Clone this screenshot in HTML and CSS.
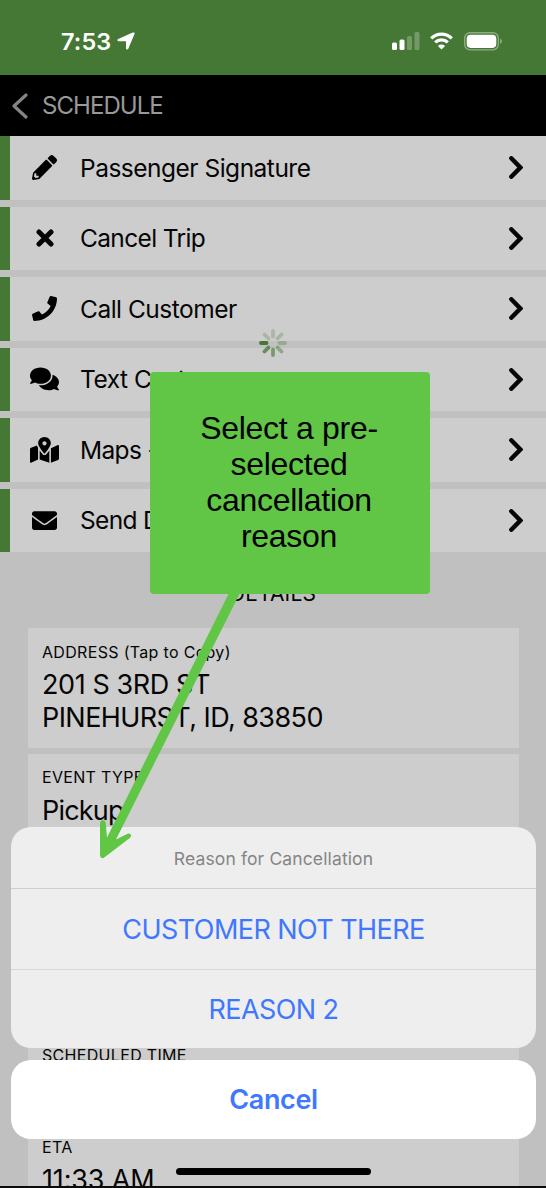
FILE: index.html
```html
<!DOCTYPE html>
<html lang="en">
<head>
<meta charset="utf-8">
<title>Schedule</title>
<link rel="stylesheet" href="styles.css">
</head>
<body>
<div class="screen">
  <header class="status">
    <div class="clock"><span class="time">7:53</span>
      <svg class="locate" viewBox="0 0 18 18"><path d="M17.300.7c.5.5.3 1 .1 1.500L11.300 16.700c-.5 1.200-2.300.9-2.300-.5V9.300H1.700C.2 9.300-.1 7.500 1.200 7L15.800.6c.6-.3 1.100-.3 1.500.1z"/></svg>
    </div>
    <div class="signals">
      <svg class="cell" width="28" height="19" viewBox="0 0 28 19"><rect x="0" y="10.500" width="5" height="7.500" rx="1.500"/><rect x="7.500" y="7.500" width="5" height="10.500" rx="1.500"/><rect class="dim" x="15" y="4" width="5" height="14" rx="1.500"/><rect class="dim" x="22.500" y="0" width="5" height="18" rx="1.500"/></svg>
      <svg class="wifi" width="23" height="18" viewBox="0 0 23 18"><path class="arc" d="M1.200 6.300a14.600 14.600 0 0 1 20.600 0M5.200 10.400a8.900 8.900 0 0 1 12.600 0"/><path d="M11.500 17.600 7.900 14a5.100 5.100 0 0 1 7.200 0z"/></svg>
      <svg class="battery" width="39" height="19" viewBox="0 0 39 19"><rect class="shell" x=".7" y=".7" width="33.600" height="17.200" rx="5.300"/><rect x="2.700" y="2.700" width="29.600" height="13.200" rx="3.800"/><path class="dim" d="M36 6.500q2 1 2 2.800t-2 2.800z"/></svg>
    </div>
  </header>
  <nav class="navbar">
    <svg width="18" height="28" viewBox="0 0 18 28"><path d="M15 3 3 14l12 11"/></svg>
    <span class="nav-title">SCHEDULE</span>
  </nav>
  <main>
    <ul class="actions">
      <li class="action"><span class="icon"><svg width="25" viewBox="0 0 512 512"><path fill-rule="evenodd" d="M497.900 142.100l-46.100 46.100c-4.700 4.700-12.300 4.700-17 0l-111-111c-4.700-4.700-4.700-12.300 0-17l46.100-46.100c18.700-18.700 49.100-18.700 67.900 0l60.100 60.100c18.800 18.700 18.800 49.100 0 67.900zM284.200 99.800L21.600 362.400.4 483.900c-2.900 16.400 11.400 30.600 27.800 27.800l121.500-21.300 262.600-262.600c4.700-4.700 4.700-12.300 0-17l-111-111c-4.800-4.700-12.400-4.700-17.100 0zM88 424h48v36.300l-64.500 11.300-31.100-31.100L51.700 376H88v48z"/></svg></span><span class="label">Passenger Signature</span><svg class="chev" width="14" height="23" viewBox="0 0 14 23"><path d="M2.300 2.300 11.300 11.500l-9 9.200"/></svg></li>
      <li class="action"><span class="icon"><svg width="18" viewBox="0 0 18 18"><path class="cross" d="M3 3l12 12M15 3 3 15"/></svg></span><span class="label tight">Cancel Trip</span><svg class="chev" width="14" height="23" viewBox="0 0 14 23"><path d="M2.300 2.300 11.300 11.500l-9 9.200"/></svg></li>
      <li class="action"><span class="icon"><svg width="25" viewBox="0 0 512 512"><path d="M493.400 24.600l-104-24c-11.300-2.600-22.900 3.300-27.500 13.900l-48 112c-4.200 9.800-1.400 21.300 6.900 28l60.600 49.600c-36 76.700-98.900 140.500-177.200 177.200l-49.600-60.600c-6.800-8.300-18.200-11.100-28-6.900l-112 48C3.900 366.500-2 378.100.6 389.400l24 104C27.100 504.200 36.700 512 48 512c256.100 0 464-207.500 464-464 0-11.200-7.700-20.900-18.600-23.400z"/></svg></span><span class="label">Call Customer</span><svg class="chev" width="14" height="23" viewBox="0 0 14 23"><path d="M2.300 2.300 11.300 11.500l-9 9.200"/></svg></li>
      <li class="action"><span class="icon"><svg width="29" viewBox="0 0 576 512"><path d="M416 192c0-88.400-93.100-160-208-160S0 103.600 0 192c0 34.300 14.100 65.900 38 92-13.400 30.200-35.500 54.200-35.800 54.500-2.200 2.300-2.800 5.700-1.500 8.700S4.800 352 8 352c36.600 0 66.900-12.300 88.700-25 32.200 15.700 70.300 25 111.300 25 114.900 0 208-71.600 208-160zm122 220c23.900-26 38-57.700 38-92 0-66.900-53.500-124.200-129.300-148.100.9 6.600 1.300 13.300 1.300 20.100 0 105.900-107.700 192-240 192-10.800 0-21.300-.8-31.700-1.900C207.800 439.600 281.800 480 368 480c41 0 79.100-9.200 111.300-25 21.800 12.700 52.100 25 88.700 25 3.200 0 6.100-1.900 7.300-4.800 1.300-2.900.7-6.300-1.500-8.700-.3-.3-22.400-24.200-35.800-54.500z"/></svg></span><span class="label">Text Customer</span><svg class="chev" width="14" height="23" viewBox="0 0 14 23"><path d="M2.300 2.300 11.300 11.500l-9 9.200"/></svg></li>
      <li class="action"><span class="icon"><svg width="29" viewBox="0 0 576 512"><path d="M288 0c-69.590 0-126 56.410-126 126 0 56.260 82.350 158.800 113.900 196.020 6.390 7.540 17.820 7.540 24.200 0C331.650 284.800 414 182.260 414 126 414 56.410 357.590 0 288 0zm0 168c-23.200 0-42-18.800-42-42s18.800-42 42-42 42 18.800 42 42-18.800 42-42 42zM20.120 215.950A32.006 32.006 0 0 0 0 245.660v250.320c0 11.320 11.430 19.060 21.940 14.860L160 448V214.920c-8.840-15.980-16.070-31.540-21.250-46.420L20.120 215.950zM288 359.670c-14.070 0-27.380-6.180-36.510-16.960-19.660-23.200-40.570-49.620-59.490-76.720v182l192 64V266c-18.920 27.090-39.820 53.520-59.490 76.720-9.130 10.770-22.440 16.950-36.510 16.950zm266.060-198.510L416 224v288l139.880-55.950A31.996 31.996 0 0 0 576 426.340V176.020c0-11.320-11.430-19.060-21.940-14.860z"/></svg></span><span class="label tight">Maps -</span><svg class="chev" width="14" height="23" viewBox="0 0 14 23"><path d="M2.300 2.300 11.300 11.500l-9 9.200"/></svg></li>
      <li class="action"><span class="icon"><svg width="25" viewBox="0 0 512 512"><path d="M502.300 190.800c3.900-3.100 9.700-.2 9.700 4.700V400c0 26.500-21.500 48-48 48H48c-26.500 0-48-21.500-48-48V195.600c0-5 5.700-7.800 9.700-4.700 22.400 17.400 52.100 39.500 154.100 113.600 21.100 15.400 56.700 47.800 92.200 47.600 35.700.3 72-32.800 92.300-47.600 102-74.100 131.600-96.300 154-113.700zM256 320c23.200.4 56.600-29.200 73.400-41.400 132.700-96.300 142.800-104.700 173.400-128.700 5.800-4.500 9.200-11.500 9.200-18.900v-19c0-26.500-21.500-48-48-48H48c-26.500 0-48 21.500-48 48v19c0 7.400 3.400 14.300 9.200 18.900 30.600 23.900 40.700 32.400 173.400 128.700 16.800 12.200 50.200 41.800 73.400 41.400z"/></svg></span><span class="label tight">Send D</span><svg class="chev" width="14" height="23" viewBox="0 0 14 23"><path d="M2.300 2.300 11.300 11.500l-9 9.200"/></svg></li>
    </ul>
    <h2 class="heading">DETAILS</h2>
    <section class="cards">
      <div class="card tall"><div class="key">ADDRESS (Tap to Copy)</div><div class="value address">201 S 3RD ST<br><span class="city">PINEHURST, ID, 83850</span></div></div>
      <div class="card"><div class="key">EVENT TYPE</div><div class="value pickup">Pickup</div></div>
      <div class="card"></div>
      <div class="card"></div>
      <div class="card"><div class="key">SCHEDULED TIME</div></div>
      <div class="card"><div class="key">ETA</div><div class="value eta">11:33 AM</div></div>
    </section>
  </main>

  <svg class="spinner" width="30" height="30" viewBox="-15 -15 30 30"><g stroke="#457735" stroke-width="3.800" stroke-linecap="round"><path d="M-12-0h5.500"/><path opacity=".25" d="M-8.500-8.500l3.900 3.900"/><path opacity=".25" d="M0-12v5.500"/><path opacity=".27" d="M8.500-8.500l-3.900 3.900"/><path opacity=".32" d="M12 0h-5.500"/><path opacity=".45" d="M8.500 8.500l-3.900-3.900"/><path opacity=".6" d="M0 12v-5.500"/><path opacity=".75" d="M-8.500 8.500l3.900-3.900"/></g></svg>

  <div class="sheet">
    <div class="options">
      <div class="sheet-title"><span>Reason for Cancellation</span></div>
      <div class="option"><span>CUSTOMER NOT THERE</span></div>
      <div class="option"><span>REASON 2</span></div>
    </div>
    <div class="cancel"><span>Cancel</span></div>
    <div class="home-bar"></div>
  </div>

  <svg class="arrow" width="150" height="280" viewBox="95 585 150 280"><path d="M229.500 592 107 837.500 105.700 822.500Q105 820 102.800 820 100 820.500 100 823.500L100 855.500Q100.500 858.800 103.500 858L129.500 838.300Q132 836 130.700 834.500 129.500 833 127 834L116 839.500 240.500 592z"/></svg>
  <div class="callout">Select a pre-<br>selected<br>cancellation<br>reason</div>
</div>
</body>
</html>
```
FILE: styles.css
```css
* { box-sizing: border-box; }
body { margin: 0; font-family: Inter, "Liberation Sans", sans-serif; color: #050505; }
.screen { position: relative; width: 546px; height: 1188px; overflow: hidden; background: #c0c0c0; border-bottom: 2px solid #0b0b0c; }
svg { display: block; flex: none; }

.status { height: 75px; background: #457735; display: flex; justify-content: space-between; padding: 28px 43px 0 61px; color: #fff; }
.clock { display: flex; height: 26px; align-items: center; gap: 6px; }
.time { font-size: 23.5px; font-weight: 600; letter-spacing: 0.1px; }
.locate { width: 18px; height: 18px; fill: #fff; }
.signals { display: flex; align-items: center; height: 26px; fill: #fff; }
.dim { opacity: .25; }
.wifi { margin-left: 10px; }
.arc { fill: none; stroke: #fff; stroke-width: 3.2; }
.battery { margin-left: 11px; }
.shell { fill: none; stroke: #fff; stroke-opacity: .4; stroke-width: 1.4; }
.battery .dim { opacity: .4; }

.navbar { height: 61px; background: #000; display: flex; align-items: center; gap: 13px; padding-left: 11px; color: #999; }
.navbar path { fill: none; stroke: #858585; stroke-width: 3.2; stroke-linecap: round; stroke-linejoin: round; }
.nav-title { font-size: 24px; font-weight: 400; letter-spacing: -0.95px; }

.actions { list-style: none; margin: 0; padding: 0; display: grid; gap: 7px; }
.action { height: 63.5px; background: #cdcdcd; border-left: 10px solid #457735; display: flex; align-items: center; padding-right: 23px; }
.icon { width: 70px; padding-right: 1px; display: flex; justify-content: center; }
.cross { stroke: #050505; stroke-width: 5; stroke-linecap: round; }
.label { flex: 1; font-size: 24.5px; font-weight: 400; letter-spacing: -0.5px; }
.tight { letter-spacing: -0.65px; }
.chev path { fill: none; stroke: #050505; stroke-width: 4.4; stroke-linecap: round; stroke-linejoin: miter; }

.heading { margin: 28px 0 0; height: 48px; line-height: 28px; text-align: center; font-size: 21px; font-weight: 400; letter-spacing: 0.2px; }
.cards { display: grid; gap: 6px; padding: 0 27px 0 28px; }
.card { height: 86.5px; background: #cdcdcd; padding: 13px 14px 0; white-space: nowrap; }
.tall { height: 120px; padding-top: 14px; }
.key { font-size: 16px; line-height: 20px; letter-spacing: 0.32px; }
.value { font-size: 27px; line-height: 33px; margin-top: 6px; letter-spacing: -0.4px; }
.city { letter-spacing: -0.57px; }
.pickup { letter-spacing: -0.8px; margin-top: 7px; }
.eta { letter-spacing: -0.15px; }

.spinner { position: absolute; left: 258px; top: 328px; }

.sheet { position: absolute; left: 11px; top: 827px; width: 525px; display: grid; }
.options { height: 221px; border-radius: 20px; background: #eee; overflow: hidden; }
.sheet-title, .option, .cancel { display: flex; align-items: center; justify-content: center; }
.sheet-title { height: 62px; padding-top: 2px; color: #858585; font-size: 17.5px; letter-spacing: 0.13px; border-bottom: 1px solid #cecece; }
.option { height: 80px; color: #3f78ff; font-size: 27px; letter-spacing: -0.57px; }
.option + .option { border-top: 1px solid #d8d8d8; }
.cancel { margin-top: 12px; height: 79px; border-radius: 20px; background: #fff; color: #3f78ff; font-size: 27px; font-weight: 600; letter-spacing: -0.4px; }
.home-bar { width: 195px; height: 7px; margin: 29px 0 0 165px; border-radius: 4px; background: #000; }

.arrow { position: absolute; left: 95px; top: 585px; fill: #61c546; }
.callout { position: absolute; left: 150px; top: 372px; width: 280px; height: 222px; padding: 38px 2px 0 0; border-radius: 4px; background: #61c546; color: #000; font: 32px/36px "Liberation Sans", Arial, sans-serif; letter-spacing: -0.3px; text-align: center; }
```
